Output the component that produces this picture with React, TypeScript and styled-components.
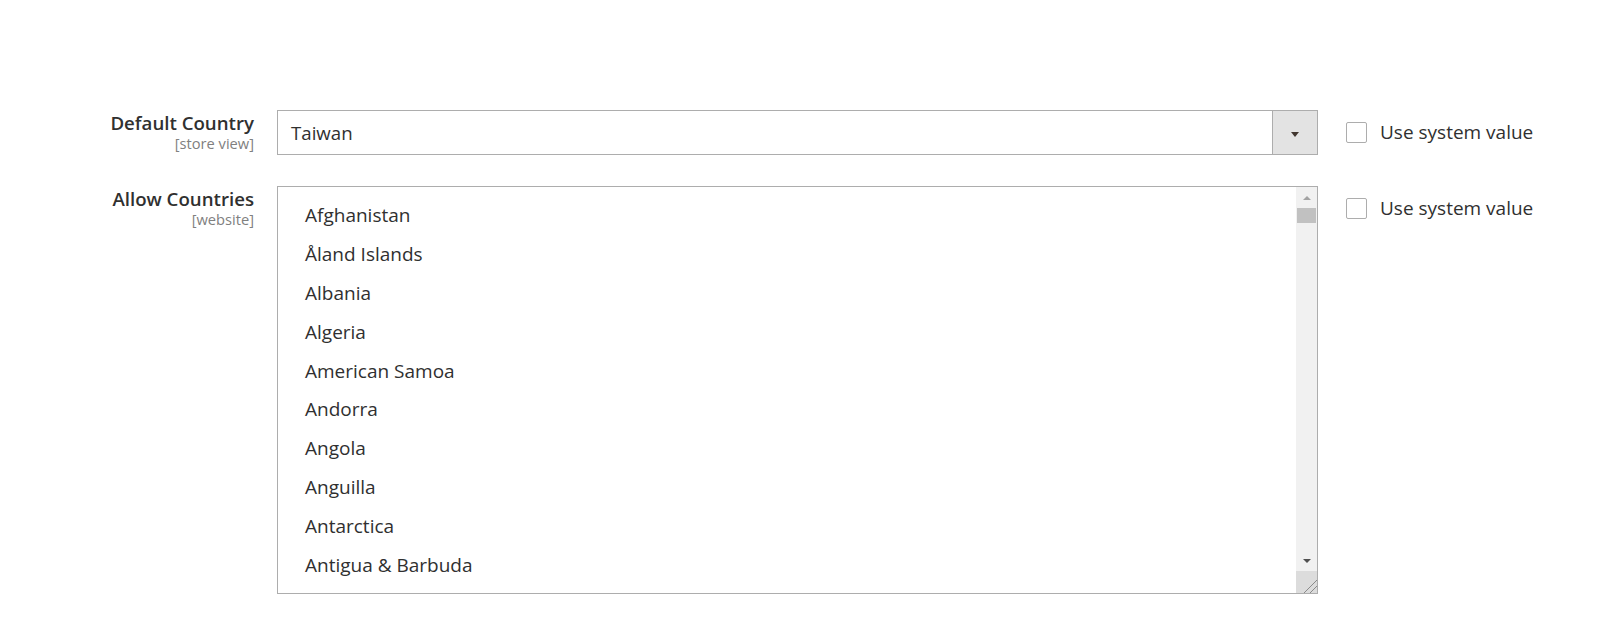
import React from "react";
import styled, { createGlobalStyle } from "styled-components";

const GlobalStyle = createGlobalStyle`
  html, body {
    margin: 0;
    padding: 0;
    background: #ffffff;
  }
  body {
    font-family: "Open Sans", "Liberation Sans", sans-serif;
    color: #303030;
  }
  * { box-sizing: border-box; }
`;

const Page = styled.div`
  width: 1600px;
  height: 619px;
  padding-top: 110px;
  overflow: hidden;
`;

const Form = styled.div`
  display: flex;
  flex-direction: column;
  gap: 31px;
`;

const Row = styled.div`
  display: grid;
  grid-template-columns: 254px 1041px auto;
  column-gap: 23px;
  align-items: start;
`;

const LabelCol = styled.div`
  display: flex;
  flex-direction: column;
  align-items: flex-end;
  text-align: right;
  padding-top: 2px;
`;

const LabelText = styled.span`
  font-size: 18.67px;
  font-weight: 600;
  line-height: 22px;
  color: #303030;
`;

const Scope = styled.span`
  font-size: 14.67px;
  line-height: 18px;
  color: #808080;
`;

const SelectBox = styled.div`
  display: flex;
  height: 45px;
  border: 1px solid #adadad;
  background: #ffffff;
`;

const SelectValue = styled.div`
  flex: 1;
  display: flex;
  align-items: center;
  padding-left: 13px;
  font-size: 18.67px;
  color: #303030;
`;

const SelectButton = styled.div`
  width: 45px;
  border-left: 1px solid #adadad;
  background: #e3e3e3;
  display: flex;
  align-items: center;
  justify-content: center;
  padding-top: 3px;
`;

const Triangle = styled.span<{ $dir: "up" | "down"; $color: string; $w?: number; $h?: number }>`
  width: 0;
  height: 0;
  border-left: ${(p) => (p.$w ?? 8) / 2}px solid transparent;
  border-right: ${(p) => (p.$w ?? 8) / 2}px solid transparent;
  ${(p) =>
    p.$dir === "down"
      ? `border-top: ${p.$h ?? 5}px solid ${p.$color};`
      : `border-bottom: ${p.$h ?? 5}px solid ${p.$color};`}
`;

const MultiBox = styled.div`
  display: flex;
  height: 408px;
  border: 1px solid #adadad;
  background: #ffffff;
  overflow: hidden;
`;

const OptionList = styled.ul`
  flex: 1;
  margin: 0;
  padding: 9px 0 0 27px;
  list-style: none;
  overflow: hidden;
`;

const OptionItem = styled.li`
  font-size: 19px;
  line-height: 38.9px;
  height: 38.9px;
  color: #303030;
  white-space: nowrap;
`;

const ScrollBar = styled.div`
  width: 21px;
  display: flex;
  flex-direction: column;
  background: #f1f1f1;
`;

const ScrollButton = styled.div<{ $h: number }>`
  height: ${(p) => p.$h}px;
  display: flex;
  align-items: center;
  justify-content: center;
`;

const Thumb = styled.div`
  height: 15px;
  margin: 0 1px;
  background: #c1c1c1;
`;

const Track = styled.div`
  flex: 1;
`;

const Corner = styled.div`
  height: 22px;
  background: #dcdcdc;
  display: flex;
  align-items: flex-end;
  justify-content: flex-end;
`;

const UseDefault = styled.label`
  display: flex;
  align-items: center;
  gap: 13px;
  margin-left: 5px;
  padding-top: 12px;
  font-size: 19px;
  color: #303030;
  white-space: nowrap;
`;

const CheckBox = styled.span`
  width: 21px;
  height: 21px;
  border: 1px solid #adadad;
  border-radius: 2px;
  background: #ffffff;
  flex: none;
`;

const UseText = styled.span`
  line-height: 21px;
  margin-top: -1px;
`;

const countries = [
  "Afghanistan",
  "Åland Islands",
  "Albania",
  "Algeria",
  "American Samoa",
  "Andorra",
  "Angola",
  "Anguilla",
  "Antarctica",
  "Antigua & Barbuda",
];

export default function App() {
  return (
    <>
      <GlobalStyle />
      <Page>
        <Form>
          <Row>
            <LabelCol>
              <LabelText>Default Country</LabelText>
              <Scope>[store view]</Scope>
            </LabelCol>
            <SelectBox>
              <SelectValue>Taiwan</SelectValue>
              <SelectButton>
                <Triangle $dir="down" $color="#41362f" $w={9} $h={5} />
              </SelectButton>
            </SelectBox>
            <UseDefault>
              <CheckBox />
              <UseText>Use system value</UseText>
            </UseDefault>
          </Row>
          <Row>
            <LabelCol>
              <LabelText>Allow Countries</LabelText>
              <Scope>[website]</Scope>
            </LabelCol>
            <MultiBox>
              <OptionList>
                {countries.map((c) => (
                  <OptionItem key={c}>{c}</OptionItem>
                ))}
              </OptionList>
              <ScrollBar>
                <ScrollButton $h={21}>
                  <Triangle $dir="up" $color="#a3a3a3" $w={8} $h={4} />
                </ScrollButton>
                <Thumb />
                <Track />
                <ScrollButton $h={20}>
                  <Triangle $dir="down" $color="#505050" $w={8} $h={4} />
                </ScrollButton>
                <Corner>
                  <svg width="14" height="14" viewBox="0 0 14 14">
                    <line x1="1" y1="14" x2="14" y2="1" stroke="#8a8a8a" strokeWidth="1" />
                    <line x1="7" y1="14" x2="14" y2="7" stroke="#8a8a8a" strokeWidth="1" />
                  </svg>
                </Corner>
              </ScrollBar>
            </MultiBox>
            <UseDefault>
              <CheckBox />
              <UseText>Use system value</UseText>
            </UseDefault>
          </Row>
        </Form>
      </Page>
    </>
  );
}
